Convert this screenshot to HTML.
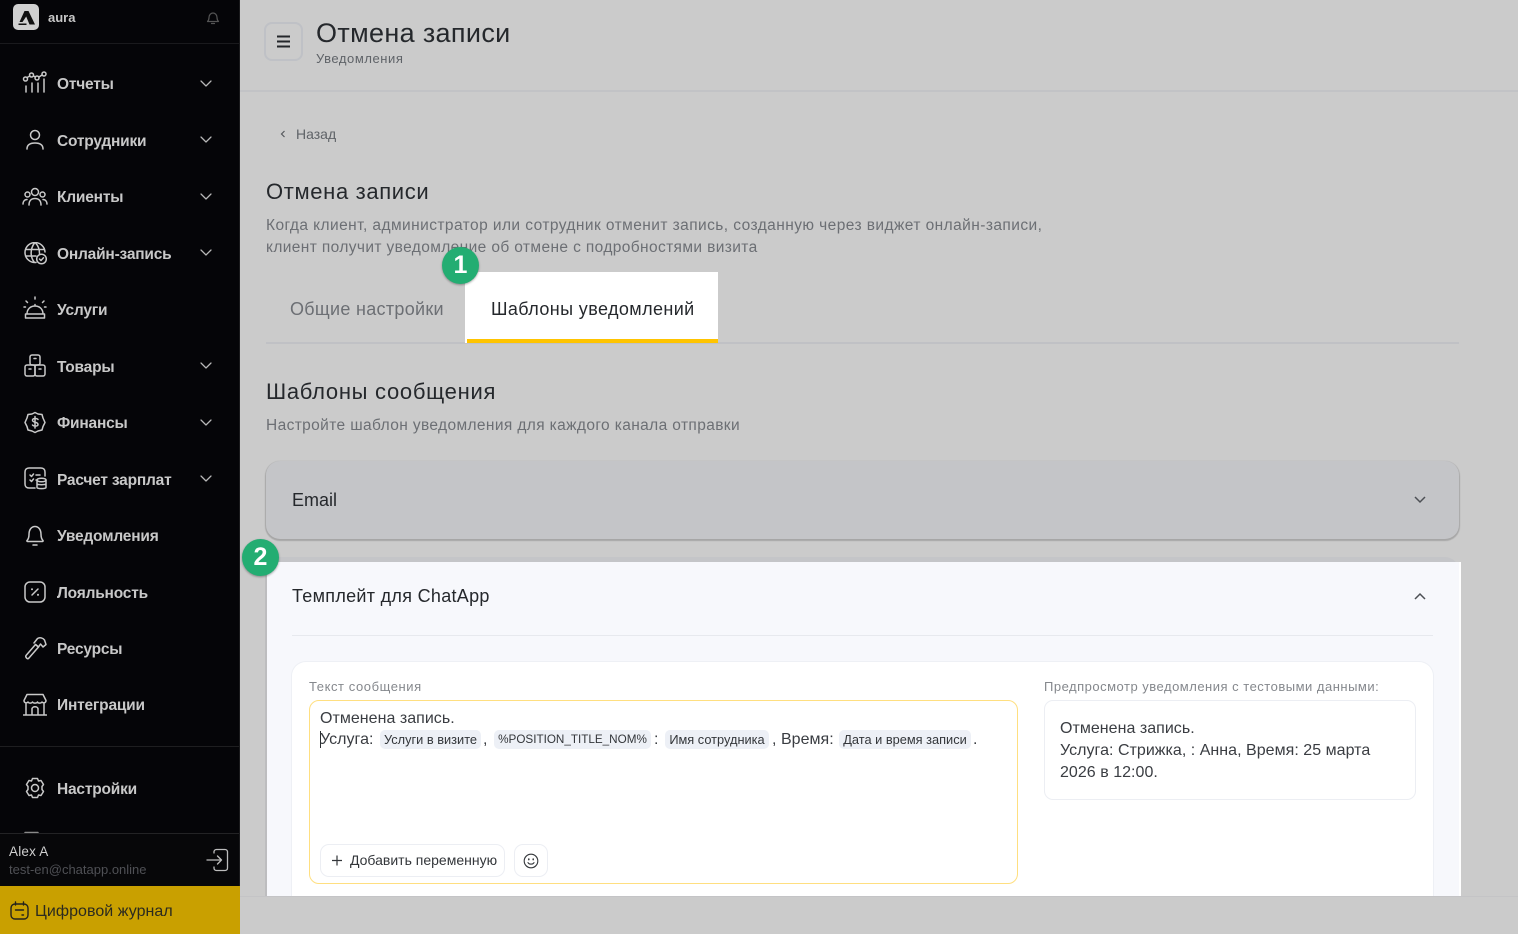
<!DOCTYPE html>
<html lang="ru"><head><meta charset="utf-8"><title>Отмена записи</title>
<style>
*{box-sizing:border-box}
html,body{margin:0;padding:0;width:1518px;height:934px;overflow:hidden;background:#cbcbcb;font-family:"Liberation Sans",sans-serif}
.a{position:absolute}
.t{position:absolute;white-space:nowrap;line-height:20px}
.nav{font-size:15.5px;font-weight:700;color:#c8c8c8;left:57px;letter-spacing:-.2px}
svg.i{position:absolute;fill:none;stroke:#c9c9c9;stroke-width:1.5;stroke-linecap:round;stroke-linejoin:round}
svg.c{stroke-width:1.25;stroke:#b8b8b8;left:199px}
.chip{position:absolute;top:730px;height:19px;background:#edf0f6;border-radius:5px;font-size:12.8px;line-height:19px;color:#33363a;text-align:center;white-space:nowrap}
.ed{font-size:16px;color:#3a3d42;letter-spacing:.03px}
.badge{position:absolute;width:37px;height:37px;border-radius:50%;background:#23ad72;color:#fff;font-size:25px;font-weight:700;text-align:center;line-height:37px;box-shadow:0 1px 2px rgba(0,0,0,.35)}
</style></head><body>

<div class="a" style="left:240px;top:0;width:1278px;height:92px;border-bottom:2px solid #c2c3c6"></div>
<div class="a" style="left:264px;top:22px;width:39px;height:39px;border:2px solid #bfc1c6;border-radius:8px"></div>
<svg class="a" style="left:276px;top:35px" width="15" height="13" viewBox="0 0 15 13"><path d="M1 1.500H14M1 6.500H14M1 11.500H14" stroke="#24272b" stroke-width="2"/></svg>
<div class="t" style="left:316px;top:20px;font-size:27px;line-height:26px;color:#25282c;letter-spacing:.35px">Отмена записи</div>
<div class="t" style="left:316px;top:49px;font-size:13px;color:#5f6368;letter-spacing:.56px">Уведомления</div>

<svg class="a" style="left:279px;top:129px" width="8" height="10" viewBox="0 0 8 10"><path d="M5.500 2L2.500 5L5.500 8" fill="none" stroke="#55585d" stroke-width="1.2"/></svg>
<div class="t" style="left:296px;top:124px;font-size:14px;color:#5f6368">Назад</div>

<div class="t" style="left:266px;top:182px;font-size:22px;color:#25282c;letter-spacing:.65px">Отмена записи</div>
<div class="t" style="left:266px;top:216px;font-size:15.5px;color:#6c6f74;letter-spacing:.43px">Когда клиент, администратор или сотрудник отменит запись, созданную через виджет онлайн-записи,</div>
<div class="t" style="left:266px;top:238px;font-size:15.5px;color:#6c6f74;letter-spacing:.38px">клиент получит уведомление об отмене с подробностями визита</div>

<div class="a" style="left:266px;top:342px;width:1193px;height:2px;background:#c0c1c5"></div>
<div class="t" style="left:290px;top:299px;font-size:18px;color:#6c6f74;letter-spacing:.3px">Общие настройки</div>
<div class="a" style="left:465px;top:272px;width:253px;height:71px;background:#fff"></div>
<div class="a" style="left:467px;top:339px;width:251px;height:4px;background:#ffc400"></div>
<div class="t" style="left:491px;top:299px;font-size:18px;color:#25282c;letter-spacing:.4px">Шаблоны уведомлений</div>

<div class="t" style="left:266px;top:382px;font-size:22px;color:#25282c;letter-spacing:.7px">Шаблоны сообщения</div>
<div class="t" style="left:266px;top:416px;font-size:15.5px;color:#6c6f74;letter-spacing:.38px">Настройте шаблон уведомления для каждого канала отправки</div>

<div class="a" style="left:266px;top:461px;width:1193px;height:78px;background:#c4c5c8;border-radius:14px;box-shadow:0 1px 1px 1px rgba(0,0,0,.18)"></div>
<div class="t" style="left:292px;top:490px;font-size:18px;color:#25282c;letter-spacing:0">Email</div>
<svg class="a" style="left:1412px;top:494px" width="16" height="12" viewBox="0 0 16 12"><path d="M3 3L8 8L13 3" fill="none" stroke="#4d5055" stroke-width="1.5"/></svg>

<div class="a" style="left:266px;top:557px;width:1193px;height:40px;background:#c4c5c8;border-radius:14px 14px 0 0"></div>
<div class="a" style="left:267px;top:562px;width:1192px;height:335px;background:#f7f8fc"></div>
<div class="a" style="left:1459px;top:562px;width:2px;height:335px;background:#fff"></div>
<div class="a" style="left:265px;top:562px;width:2px;height:335px;background:#bdbdbf"></div>
<div class="t" style="left:292px;top:586px;font-size:18px;color:#25282c;letter-spacing:.3px">Темплейт для ChatApp</div>
<svg class="a" style="left:1412px;top:590px" width="16" height="12" viewBox="0 0 16 12"><path d="M3 9L8 4L13 9" fill="none" stroke="#4d5055" stroke-width="1.5"/></svg>
<div class="a" style="left:292px;top:635px;width:1141px;height:1px;background:#e7e9ee"></div>

<div class="a" style="left:292px;top:662px;width:1141px;height:250px;background:#fff;border-radius:14px;box-shadow:0 0 0 1px #eef0f5"></div>
<div class="t" style="left:309px;top:677px;font-size:13px;color:#85888d;letter-spacing:.57px">Текст сообщения</div>
<div class="a" style="left:309px;top:700px;width:709px;height:184px;border:1.5px solid #ffdf80;border-radius:10px;background:#fff"></div>
<div class="t ed" style="left:320px;top:709px">Отменена запись.</div>
<div class="a" style="left:320px;top:731px;width:1px;height:17px;background:#2c2f33"></div>
<div class="t ed" style="left:320px;top:730px">Услуга:</div>
<div class="chip" style="left:380px;width:101px">Услуги в визите</div>
<div class="t ed" style="left:483px;top:730px">,</div>
<div class="chip" style="left:494px;width:157px;font-size:11.7px">%POSITION_TITLE_NOM%</div>
<div class="t ed" style="left:654px;top:730px">:</div>
<div class="chip" style="left:665px;width:104px">Имя сотрудника</div>
<div class="t ed" style="left:772px;top:730px">, Время:</div>
<div class="chip" style="left:839px;width:132px">Дата и время записи</div>
<div class="t ed" style="left:973px;top:730px">.</div>

<div class="a" style="left:320px;top:844px;width:185px;height:33px;border:1px solid #eceef3;border-radius:9px;background:#fff"></div>
<svg class="a" style="left:331px;top:854px" width="12" height="13" viewBox="0 0 12 13"><path d="M6 1.500V11.500M1 6.500H11" stroke="#33363a" stroke-width="1.2" fill="none"/></svg>
<div class="t" style="left:350px;top:850px;font-size:14px;color:#33363a;letter-spacing:0">Добавить переменную</div>
<div class="a" style="left:514px;top:844px;width:34px;height:33px;border:1px solid #eceef3;border-radius:9px;background:#fff"></div>
<svg class="a" style="left:523px;top:853px" width="16" height="16" viewBox="0 0 16 16" fill="none" stroke="#33363a" stroke-width="1.100"><circle cx="8" cy="8" r="6.800"/><path d="M5 9.600C6 11.600 10 11.600 11 9.600" stroke-linecap="round"/><path d="M5.800 6V6.600M10.200 6V6.600" stroke-width="1.500" stroke-linecap="round"/></svg>

<div class="t" style="left:1044px;top:677px;font-size:13px;color:#85888d;letter-spacing:.5px">Предпросмотр уведомления с тестовыми данными:</div>
<div class="a" style="left:1044px;top:700px;width:372px;height:100px;border:1px solid #eceef3;border-radius:9px;background:#fff"></div>
<div class="t ed" style="left:1060px;top:719px">Отменена запись.</div>
<div class="t ed" style="left:1060px;top:741px">Услуга: Стрижка, : Анна, Время: 25 марта</div>
<div class="t ed" style="left:1060px;top:763px">2026 в 12:00.</div>

<div class="a" style="left:240px;top:896px;width:1278px;height:38px;background:#cbcbcb;border-top:1px solid #c4c4c6"></div>

<div class="badge" style="left:442px;top:247px">1</div>
<div class="badge" style="left:242px;top:539px">2</div>

<!-- SIDEBAR -->
<div class="a" style="left:0;top:0;width:240px;height:934px;background:#050508;border-right:1px solid #1a1a1c"></div>
<div class="a" style="left:13px;top:4px;width:26px;height:26px;background:#d0d0d0;border-radius:5px"></div>
<svg class="a" style="left:13px;top:4px" width="26" height="26" viewBox="0 0 26 26"><path d="M11.500 7H15.500L22 20.500H16.500L13.200 12.500L9.500 18H6.500ZM5.500 19.500H13.500V21H5.500Z" fill="#111"/></svg>
<div class="t" style="left:48px;top:8px;font-size:13px;font-weight:700;color:#c8c8c8">aura</div>
<svg class="i" style="left:205px;top:10px;stroke:#555;stroke-width:1.2" width="16" height="16" viewBox="0 0 16 16"><path d="M2.500 11.500C3.500 10.500 4 9.500 4 7.500C4 5 5.800 3 8 3C10.200 3 12 5 12 7.500C12 9.500 12.500 10.500 13.500 11.500ZM6.500 13.500H9.500"/></svg>
<div class="a" style="left:0;top:43px;width:239px;height:1px;background:#1a1a1d"></div>

<svg class="i" style="left:22px;top:71px" width="26" height="24" viewBox="0 0 26 24"><circle cx="3.500" cy="8" r="2"/><circle cx="9.500" cy="4" r="2"/><circle cx="15" cy="7" r="2"/><circle cx="22" cy="3" r="2"/><path d="M5 6.500L8 5M11.500 5L13.500 6M17 6L20 4M4 15V21M10 12V21M16 12V21M22 8V21"/></svg>
<div class="t nav" style="top:75px">Отчеты</div>
<svg class="i" style="left:25px;top:129px" width="20" height="21" viewBox="0 0 20 21"><circle cx="10" cy="6" r="4.500"/><path d="M2 20C2 16 5 14 10 14C15 14 18 16 18 20"/></svg>
<div class="t nav" style="top:132px">Сотрудники</div>
<svg class="i" style="left:22px;top:187px" width="26" height="19" viewBox="0 0 26 19"><circle cx="13" cy="5" r="3.500"/><circle cx="5.500" cy="7.500" r="2.500"/><circle cx="20.500" cy="7.500" r="2.500"/><path d="M7 18C7 14 9 11.500 13 11.500C17 11.500 19 14 19 18M1 17C1 14.500 2.500 12.500 5 12.500M25 17C25 14.500 23.500 12.500 21 12.500"/></svg>
<div class="t nav" style="top:188px">Клиенты</div>
<svg class="i" style="left:24px;top:242px" width="24" height="24" viewBox="0 0 24 24"><path d="M12 20.500A10 10 0 1 1 21 10M1.500 7.500H20M1.500 14H12M10.500 1C6 7 6 15 10.500 20.500M11.500 1C14.500 4 15.500 8 15.500 11.500"/><circle cx="17.500" cy="17" r="4.800"/><path d="M15.500 17L17 18.500L19.500 15.800"/></svg>
<div class="t nav" style="top:245px">Онлайн-запись</div>
<svg class="i" style="left:23px;top:296px" width="24" height="24" viewBox="0 0 24 24"><path d="M12 1V3M3 5L4.500 6.500M21 5L19.500 6.500M1 11H2.500M21.500 11H23M4 18C4 13 7.500 10 12 10C16.500 10 20 13 20 18M12 10V8.500M2.500 18H21.500V22H2.500Z"/></svg>
<div class="t nav" style="top:301px">Услуги</div>
<svg class="i" style="left:24px;top:354px" width="22" height="23" viewBox="0 0 22 23"><rect x="6" y="1" width="10" height="10" rx="2"/><rect x="1" y="11" width="10" height="11" rx="2"/><rect x="11" y="11" width="10" height="11" rx="2"/><path d="M10 4.500H12M5 15H7M15 15H17"/></svg>
<div class="t nav" style="top:358px">Товары</div>
<svg class="i" style="left:24px;top:411px" width="22" height="23" viewBox="0 0 22 23"><path d="M11 1.500L14 3L18 3.500L19 7L21 11.500L19 15.500L18 19L14 20L11 21.500L8 20L4 19L3 15.500L1 11.500L3 7L4 3.500L8 3Z"/><path d="M14 8.500C13 7 8.500 7 8.500 9.200C8.500 12 14 10.500 14 13.500C14 15.500 9.500 15.500 8.500 14M11 5.500V17"/></svg>
<div class="t nav" style="top:414px">Финансы</div>
<svg class="i" style="left:24px;top:467px" width="23" height="23" viewBox="0 0 23 23"><path d="M21 9V5C21 2.500 19.500 1 17 1H5C2.500 1 1 2.500 1 5V17C1 19.500 2.500 21 5 21H11"/><path d="M6 8L7.500 9.500L9.500 7M6 13L7.500 14.500L9.500 12M12 8H16M12 13H13"/><ellipse cx="17.500" cy="13" rx="4.500" ry="1.800"/><path d="M13 13V20.500C13 22 22 22 22 20.500V13M13 16.800C13 18 22 18 22 16.800"/></svg>
<div class="t nav" style="top:471px">Расчет зарплат</div>
<svg class="i" style="left:26px;top:525px" width="18" height="21" viewBox="0 0 18 21"><path d="M1 15.500C2.500 14 3 12.500 3 9.500C3 4.500 5.500 1.500 9 1.500C12.500 1.500 15 4.500 15 9.500C15 12.500 15.500 14 17 15.500C17.300 16 17 16.500 16.500 16.500H1.500C1 16.500 .7 16 1 15.500ZM7 20H11"/></svg>
<div class="t nav" style="top:527px">Уведомления</div>
<svg class="i" style="left:24px;top:581px" width="22" height="22" viewBox="0 0 22 22"><rect x="1" y="1" width="20" height="20" rx="5"/><path d="M14 8L8 14"/><path d="M8 8.200V8.300M14 13.800V13.900" stroke-width="2"/></svg>
<div class="t nav" style="top:584px">Лояльность</div>
<svg class="i" style="left:24px;top:636px" width="23" height="24" viewBox="0 0 23 24"><path d="M2 19.500L11.500 8.500L14.500 11L4.500 22.500C3.500 23.500 1 21 2 19.500Z"/><path d="M10 7L13.500 2.500C16 1 19 2 20.500 4L22 8.500L19 11L16.500 8L14.500 11L11.500 8.500"/></svg>
<div class="t nav" style="top:640px">Ресурсы</div>
<svg class="i" style="left:23px;top:693px" width="24" height="23" viewBox="0 0 24 23"><path d="M4 1.500H20L23 7.500C23 10 20.500 10.500 19 9C18 10.500 15 10.500 14.500 9C13.500 10.500 10.500 10.500 9.500 9C8.500 10.500 6 10.500 5 9C3.500 10.500 1 10 1 7.500ZM3 10.500V21.500M21 10.500V21.500M.5 22H23.500M9 21.500V16C9 13 15 13 15 16V21.500"/></svg>
<div class="t nav" style="top:696px">Интеграции</div>
<div class="a" style="left:0;top:746px;width:239px;height:1px;background:#1e1e20"></div>
<svg class="i" style="left:24px;top:777px" width="22" height="22" viewBox="0 0 22 22"><path d="M8.500 1.500H13.500L14.500 4L17 3.500L19.500 7.500L18 9.500V12.500L19.500 14.500L17 18.500L14.500 18L13.500 20.500H8.500L7.500 18L5 18.500L2.500 14.500L4 12.500V9.500L2.500 7.500L5 3.500L7.500 4Z"/><circle cx="11" cy="11" r="3.500"/></svg>
<div class="t nav" style="top:780px">Настройки</div>

<svg class="i" style="left:22px;top:831px;stroke:#8a8a8a" width="20" height="3" viewBox="0 0 20 3"><path d="M3 1.500H16"/></svg>
<div class="a" style="left:0;top:833px;width:239px;height:53px;background:#070709;border-top:1px solid #232325"></div>
<div class="t" style="left:9px;top:842px;font-size:13.5px;color:#cfcfcf;letter-spacing:.2px">Alex A</div>
<div class="t" style="left:9px;top:860px;font-size:13px;color:#4f5055;letter-spacing:0">test-en@chatapp.online</div>
<svg class="i" style="left:206px;top:848px;stroke-width:1.300;stroke:#bdbdbd" width="23" height="24" viewBox="0 0 23 24"><path d="M8 5V4C8 2.500 9 1.500 10.500 1.500H19C20.500 1.500 21.500 2.500 21.500 4V20C21.500 21.500 20.500 22.500 19 22.500H10.500C9 22.500 8 21.500 8 20V19M1 12H15.500M11.500 8L15.500 12L11.500 16"/></svg>
<div class="a" style="left:0;top:886px;width:240px;height:48px;background:#c9a000"></div>
<svg class="a" style="left:10px;top:901px" width="19" height="19" viewBox="0 0 19 19" fill="none" stroke="#24231c" stroke-width="1.400" stroke-linecap="round"><rect x="1" y="3" width="17" height="15" rx="4"/><path d="M5.500 1V4M13.500 1V4M5.500 9H13.500M12 14H13.500"/></svg>
<div class="t" style="left:35px;top:902px;font-size:16px;color:#2b2a1f;letter-spacing:.05px">Цифровой журнал</div>

<svg class="i c" style="top:79px" width="14" height="9" viewBox="0 0 14 9"><path d="M2 2L7 7L12 2"/></svg>
<svg class="i c" style="top:135px" width="14" height="9" viewBox="0 0 14 9"><path d="M2 2L7 7L12 2"/></svg>
<svg class="i c" style="top:192px" width="14" height="9" viewBox="0 0 14 9"><path d="M2 2L7 7L12 2"/></svg>
<svg class="i c" style="top:248px" width="14" height="9" viewBox="0 0 14 9"><path d="M2 2L7 7L12 2"/></svg>
<svg class="i c" style="top:361px" width="14" height="9" viewBox="0 0 14 9"><path d="M2 2L7 7L12 2"/></svg>
<svg class="i c" style="top:418px" width="14" height="9" viewBox="0 0 14 9"><path d="M2 2L7 7L12 2"/></svg>
<svg class="i c" style="top:474px" width="14" height="9" viewBox="0 0 14 9"><path d="M2 2L7 7L12 2"/></svg>
</body></html>
